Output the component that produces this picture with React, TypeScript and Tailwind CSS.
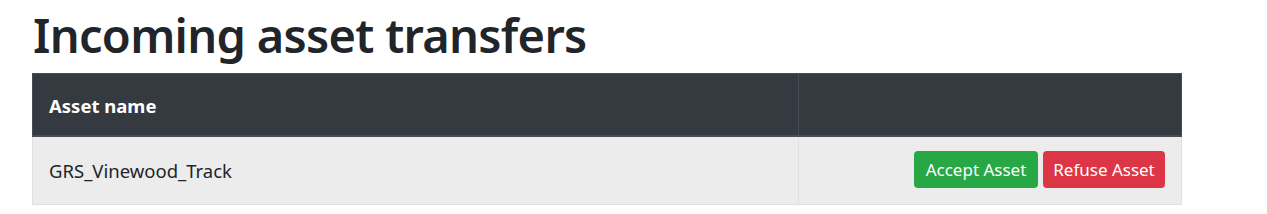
export default function App() {
  return (
    <div className="w-[1267px] h-[214px] bg-white" style={{ fontFamily: '"Noto Sans", sans-serif' }}>
      <div className="pl-[32px] pr-[85px]">
        <h1 className="text-[47px] leading-[70px] font-semibold tracking-[-0.7px] text-[#212529] h-[73px] pl-[1px]">Incoming asset transfers</h1>
        <table className="w-full border-collapse text-[18.5px] text-[#212529]">
          <thead>
            <tr className="bg-[#343a40] text-white h-[62px]">
              <th className="text-left font-bold px-[16px] pt-[3px] border border-[#454d55] border-b-2">Asset name</th>
              <th className="w-[383px] border border-[#454d55] border-b-2"></th>
            </tr>
          </thead>
          <tbody>
            <tr className="bg-[#ececec] h-[69px]">
              <td className="px-[16px] pt-[1px] border border-[#dee2e6]">GRS_Vinewood_Track</td>
              <td className="px-[16px] border border-[#dee2e6]">
                <div className="flex justify-end gap-[5px] -mt-[1px]">
                  <button className="bg-[#28a745] text-white text-[17px] rounded-[4px] h-[37px] px-[10px] w-[124px] whitespace-nowrap">Accept Asset</button>
                  <button className="bg-[#dc3545] text-white text-[17px] rounded-[4px] h-[37px] px-[10px] w-[122px] whitespace-nowrap">Refuse Asset</button>
                </div>
              </td>
            </tr>
          </tbody>
        </table>
      </div>
    </div>
  );
}
